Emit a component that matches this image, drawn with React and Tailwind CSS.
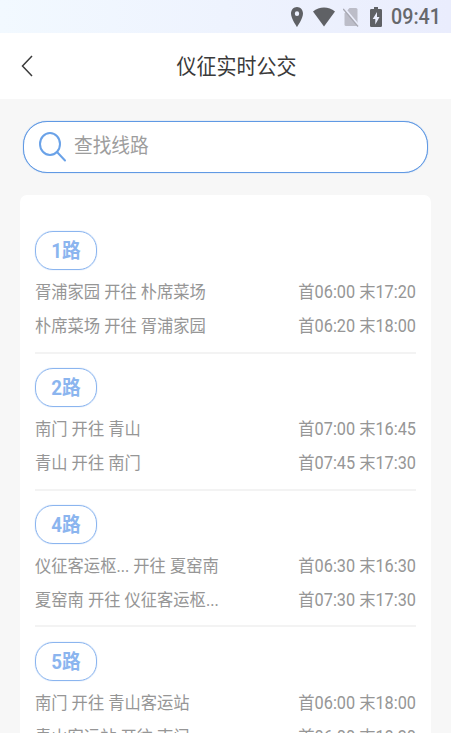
const ROUTES = [
  { no: "1路", trips: [["胥浦家园 开往 朴席菜场", "首06:00 末17:20"], ["朴席菜场 开往 胥浦家园", "首06:20 末18:00"]] },
  { no: "2路", trips: [["南门 开往 青山", "首07:00 末16:45"], ["青山 开往 南门", "首07:45 末17:30"]] },
  { no: "4路", trips: [["仪征客运枢... 开往 夏窑南", "首06:30 末16:30"], ["夏窑南 开往 仪征客运枢...", "首07:30 末17:30"]] },
  { no: "5路", trips: [["南门 开往 青山客运站", "首06:00 末18:00"], ["青山客运站 开往 南门", "首06:00 末18:30"]] },
];

function StatusBar() {
  return (
    <div className="flex h-[33px] shrink-0 items-center justify-end bg-linear-to-r from-[#f2f9ff] to-[#eaedfd] pr-[10px] text-[#5f6165]">
      <svg className="mr-[10px] h-5 w-3" viewBox="0 0 12 20" fill="currentColor">
        <path fillRule="evenodd" d="M6 0C2.7 0 0 2.8 0 6.5 0 11.5 6 20 6 20s6-8.500 6-13.500C12 2.800 9.300 0 6 0Zm0 4.300a2.200 2.400 0 1 1 0 4.800 2.200 2.400 0 0 1 0-4.800Z" />
      </svg>
      <svg className="mr-[8px] h-5 w-[22px]" viewBox="0 0 22 20" fill="currentColor">
        <path d="M0 4.500C3.200 1.900 7 .5 11 .5s7.800 1.400 11 4L11 19.500Z" />
      </svg>
      <svg className="mr-[11px] h-5 w-4" viewBox="0 0 16 20">
        <path d="M1.500 6.500 6.500 1H13q1.500 0 1.500 1.500V17.500q0 1.500-1.500 1.500H3q-1.500 0-1.500-1.500Z" fill="#bcbdc8" />
        <path d="m1.200 1.200 14.600 17.600" stroke="#ebeefc" strokeWidth="2.200" />
        <path d="M.2 1.900 15 19.500" stroke="#a8a9b2" strokeWidth="1.300" />
      </svg>
      <svg className="mr-[9px] h-5 w-3" viewBox="0 0 12 20" fill="currentColor">
        <path fillRule="evenodd" d="M4 0h4v2h2.700Q12 2 12 3.300v15.400Q12 20 10.700 20H1.300Q0 20 0 18.700V3.300Q0 2 1.300 2H4ZM7 5 2.700 12H5.300v5.500L9.500 10H7Z" />
      </svg>
      <span className="inline-block translate-y-[0.5px] scale-y-[1.14] text-[19.700px] leading-none font-medium text-[#66686c]">09:41</span>
    </div>
  );
}

function Route({ no, trips, last }) {
  return (
    <section className={"flex h-[136.800px] shrink-0 flex-col pt-[14.300px] " + (last ? "" : "border-b-2 border-[#f3f3f3]")}>
      <div className="flex h-[39px] w-[62px] shrink-0 items-center justify-center rounded-[18px] border border-[#8bb5ef] pt-[4px] text-[18.700px] font-bold text-[#8bb5ef] shadow-[0_0_1px_#8bb5ef]">
        <span className="inline-block scale-y-[1.07] leading-none">{no}</span>
      </div>
      <div className="mt-[6px] text-[16.300px] text-[#969696]">
        {trips.map(([name, time]) => (
          <div key={name} className="flex h-[34.200px] items-center justify-between leading-none whitespace-nowrap">
            <span className="inline-block scale-y-[1.07]">{name}</span>
            <span className="inline-block scale-y-[1.07]">{time}</span>
          </div>
        ))}
      </div>
    </section>
  );
}

export default function App() {
  return (
    <div className="flex h-[733px] w-[451px] flex-col overflow-hidden bg-[#f7f7f7] font-[Roboto,'Noto_Sans_CJK_SC',sans-serif]">
      <StatusBar />
      <header className="grid h-[66px] shrink-0 grid-cols-[60px_1fr_38px] items-center bg-white">
        <svg className="ml-[21px] h-[22px] w-3" viewBox="0 0 12 22" fill="none" stroke="#3b3b3b" strokeWidth="1.500">
          <path d="M11 1 1.500 11 11 21" />
        </svg>
        <h1 className="pt-[2px] text-center text-[20px] leading-none text-[#3a3a3a]">
          <span className="inline-block scale-y-[1.07]">仪征实时公交</span>
        </h1>
      </header>
      <div className="mr-[23px] ml-[22.500px] mt-[22px] flex h-[52px] shrink-0 items-center rounded-[24px] border border-[#6099e4] bg-white shadow-[0_0_1px_#6aa0e6]">
        <svg className="ml-[15px] h-[30px] w-7" viewBox="0 0 28 30" fill="none" stroke="#6aa2e8" strokeWidth="2">
          <ellipse cx="11" cy="12" rx="10" ry="11" />
          <path d="m18 20 8 8.500" strokeLinecap="round" />
        </svg>
        <span className="mt-px ml-[7.500px] inline-block scale-y-[1.07] text-[18.700px] leading-none text-[#9d9d9d]">查找线路</span>
      </div>
      <main className="mx-5 mt-[22px] flex min-h-0 flex-1 flex-col overflow-hidden rounded-t-[7px] bg-white px-[15px] pt-[22px]">
        {ROUTES.map((r, i) => (
          <Route key={r.no} {...r} last={i === ROUTES.length - 1} />
        ))}
      </main>
    </div>
  );
}
